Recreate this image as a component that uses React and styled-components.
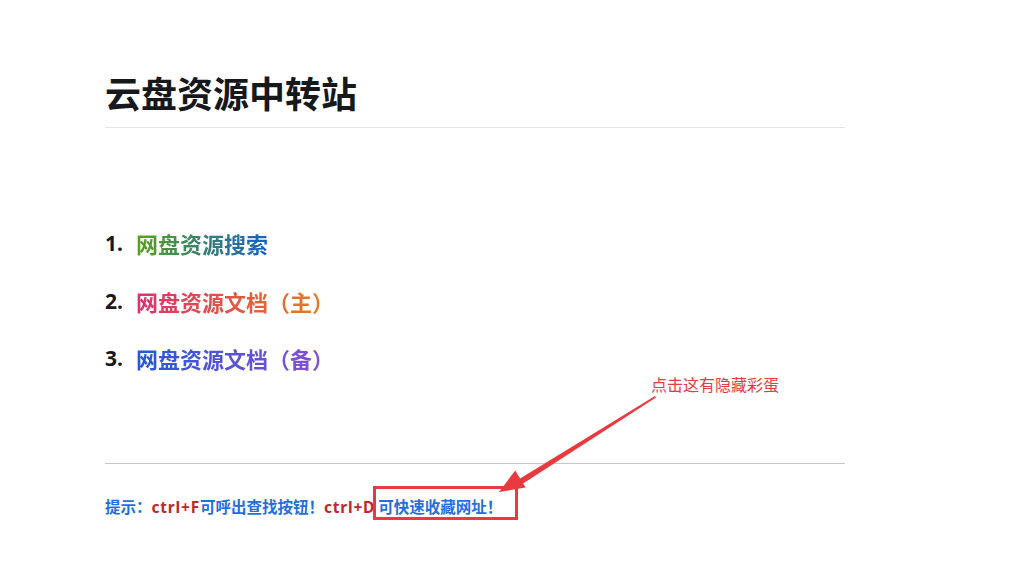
import React from 'react';
import styled, { createGlobalStyle } from 'styled-components';

const GlobalStyle = createGlobalStyle`
    html, body {
        margin: 0;
        padding: 0;
        background: #ffffff;
    }
    body {
        font-family: "Noto Sans CJK SC", "Noto Sans", sans-serif;
    }
`;

// -------------------------------------------------------- Data
const links = [
    { id: 1, label: '网盘资源搜索', from: '#5aa21a', to: '#1660c8' },
    { id: 2, label: '网盘资源文档（主）', from: '#e02e6e', to: '#e6801a' },
    { id: 3, label: '网盘资源文档（备）', from: '#2458d8', to: '#8e4ed6' }
];

const App = () => {
    return (
        <Page>
            <GlobalStyle />
            <Content>
                <Title>云盘资源中转站</Title>
                <Divider />

                <LinkList>
                    {links.map(link => (
                        <LinkItem key={link.id}>
                            <Num>{link.id}.</Num>
                            <GradientLink href="#" $from={link.from} $to={link.to}>
                                {link.label}
                            </GradientLink>
                        </LinkItem>
                    ))}
                </LinkList>

                <Divider $dark />

                <Tip>
                    提示：<Key>ctrl+F</Key>可呼出查找按钮！<Key>ctrl+D</Key>
                    <Boxed>可快速收藏网址！</Boxed>
                </Tip>
            </Content>

            <Annotation>
                <Note>点击这有隐藏彩蛋</Note>
                <Arrow width="170" height="110" viewBox="0 0 170 110">
                    <path
                        d="M158 5 L159 6.5 L24.5 93.5 L19 90 Z"
                        fill="#e83a3f"
                    />
                    <path
                        d="M2 101 L18.2 79.5 L28.6 96.5 Z"
                        fill="#e83a3f"
                    />
                </Arrow>
            </Annotation>
        </Page>
    );
};

const Page = styled.div`
    position: relative;
    width: 1019px;
    height: 584px;
    background: #fff;
`;

const Content = styled.div`
    width: 740px;
    padding: 70px 0 0 105px;
`;

const Title = styled.h1`
    margin: 0;
    font-size: 36px;
    line-height: 44px;
    font-weight: 700;
    color: #16181c;
`;

const Divider = styled.div`
    height: 1px;
    background: ${props => props.$dark ? '#c8c8c8' : '#e6e6e6'};
    margin: ${props => props.$dark ? '0' : '13px 0 0'};
`;

const LinkList = styled.ol`
    list-style: none;
    margin: 0;
    padding: 100px 0 90px;
    display: flex;
    flex-direction: column;
    gap: 27.5px;
`;

const LinkItem = styled.li`
    display: flex;
    align-items: center;
    height: 30px;
    font-size: 22px;
    font-weight: 700;
`;

const Num = styled.span`
    width: 31px;
    color: #16181c;
    font-size: 21px;
    font-family: "Noto Sans", "Noto Sans CJK SC", sans-serif;
`;

const GradientLink = styled.a`
    display: inline-block;
    text-decoration: none;
    background: linear-gradient(90deg, ${props => props.$from}, ${props => props.$to});
    -webkit-background-clip: text;
    background-clip: text;
    -webkit-text-fill-color: transparent;
    color: transparent;
`;

const Tip = styled.p`
    margin: 22px 0 0;
    font-size: 15.5px;
    line-height: 22px;
    font-weight: 700;
    color: #1f6fe0;
    white-space: nowrap;
`;

const Key = styled.span`
    color: #c0262b;
    letter-spacing: 0.8px;
    font-family: "Noto Sans", "Noto Sans CJK SC", sans-serif;
`;

const Boxed = styled.span`
    display: inline-block;
    margin-left: -2px;
    padding: 6px 13px 0 2px;
    border: 3px solid #e83a3f;
    line-height: 22px;
`;

const Annotation = styled.div`
    position: absolute;
    left: 497px;
    top: 373px;
    width: 290px;
    height: 130px;
`;

const Note = styled.span`
    position: absolute;
    left: 154px;
    top: 0;
    font-size: 16px;
    line-height: 22px;
    color: #e83a3f;
    white-space: nowrap;
`;

const Arrow = styled.svg`
    position: absolute;
    left: 0;
    top: 18px;
`;

export default App;
